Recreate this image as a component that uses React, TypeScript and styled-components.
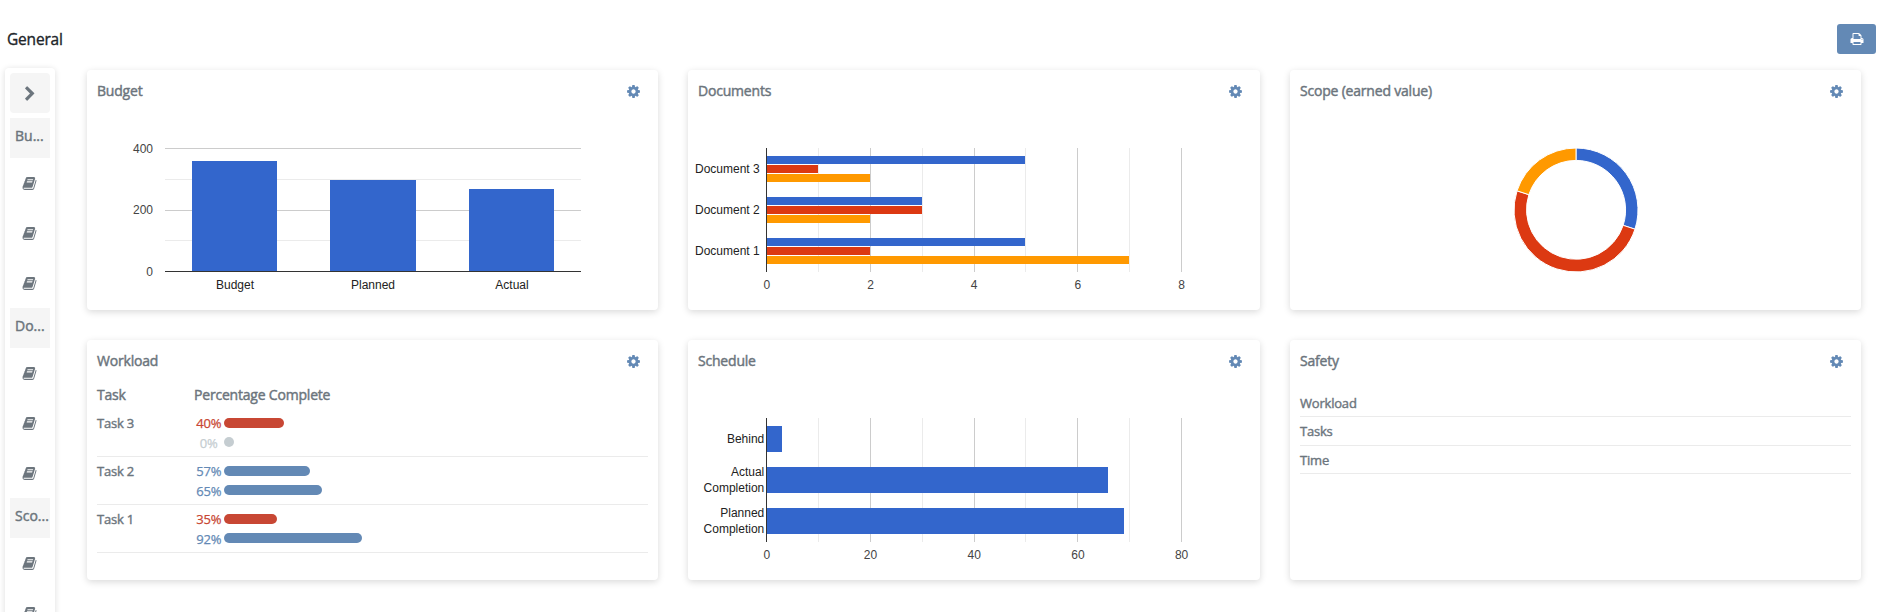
import React from 'react';
import styled, { createGlobalStyle } from 'styled-components';

const GlobalStyle = createGlobalStyle`
  * { box-sizing: border-box; }
  html, body { margin: 0; padding: 0; background: #fff; overflow: hidden; }
  body { font-family: "Open Sans", "Noto Sans", sans-serif; color: #6c757d; }
`;

const BLUE = '#3366cc';
const RED = '#dc3912';
const ORANGE = '#ff9900';

const Page = styled.div`
  height: 612px;
  display: flex;
  flex-direction: column;
  overflow: hidden;
`;

const TopBar = styled.header`
  flex: none;
  height: 68px;
  padding: 10px 14px 0 7px;
  display: flex;
  align-items: center;
  justify-content: space-between;
`;

const PageTitle = styled.h1`
  margin: 0;
  font-size: 15.5px;
  font-weight: 400;
  line-height: 20px;
  letter-spacing: -0.2px;
  color: #212529;
  -webkit-text-stroke: 0.35px currentColor;
`;

const PrintButton = styled.button`
  width: 39px;
  height: 30px;
  padding: 0;
  border: 0;
  border-radius: 3px;
  display: flex;
  align-items: center;
  justify-content: center;
  background: #6389b5;
  color: #fff;
`;

const Body = styled.div`
  flex: 1;
  min-height: 0;
  display: flex;
  align-items: flex-start;
  gap: 32px;
  padding-left: 5px;
`;

const Sidebar = styled.nav`
  flex: none;
  width: 50px;
  padding: 5px;
  border-radius: 4px;
  background: #fff;
  box-shadow: 0 1px 6px rgba(0, 0, 0, 0.14);
`;

const Toggle = styled.button`
  width: 40px;
  height: 40px;
  margin-bottom: 5px;
  padding: 1px 0 0;
  border: 0;
  border-radius: 4px;
  display: flex;
  align-items: center;
  justify-content: center;
  background: #f5f5f5;
  color: #6c757d;
`;

const GroupName = styled.div`
  height: 40px;
  padding: 0 1px 4px 5px;
  background: #f5f5f5;
  font-size: 14px;
  font-weight: 400;
  line-height: 36px;
  white-space: nowrap;
  -webkit-text-stroke: 0.45px currentColor;
`;

const NavItem = styled.a`
  height: 50px;
  padding-right: 1px;
  display: flex;
  align-items: center;
  justify-content: center;
  color: #6c757d;
`;

const Grid = styled.main`
  display: grid;
  grid-template-columns: 571px 572px 571px;
  grid-auto-rows: 240px;
  gap: 30px;
  padding-top: 2px;
`;

const Card = styled.section`
  border-radius: 4px;
  background: #fff;
  box-shadow: 0 2px 7px rgba(0, 0, 0, 0.15);
`;

const CardHeader = styled.div`
  height: 40px;
  padding: 2px 17px 0 10px;
  display: flex;
  align-items: center;
  justify-content: space-between;
  color: #6389b5;
`;

const CardTitle = styled.h2`
  margin: 0;
  color: #6c757d;
  font-size: 14px;
  font-weight: 400;
  line-height: 20px;
  letter-spacing: -0.2px;
  -webkit-text-stroke: 0.45px currentColor;
`;

const Chart = styled.svg`
  display: block;
  width: 100%;
  height: 200px;
  font-family: "Liberation Sans", Arial, sans-serif;
  font-size: 12px;
`;

const Table = styled.div`
  margin: 0 10px;
  font-size: 13px;
  font-weight: 400;
`;

const TableHead = styled.div`
  display: grid;
  grid-template-columns: 97px 1fr;
  height: 29px;
  padding-top: 5px;
  font-size: 14px;
  line-height: 20px;
  letter-spacing: -0.2px;
  -webkit-text-stroke: 0.45px currentColor;
`;

const TaskRow = styled.div`
  display: grid;
  grid-template-columns: 97px 1fr;
  height: 48px;
  border-bottom: 1px solid #ebebeb;
`;

const TaskName = styled.div`
  padding-top: 5px;
  font-size: 13px;
  line-height: 18px;
  letter-spacing: -0.2px;
  -webkit-text-stroke: 0.4px currentColor;
`;

const Meters = styled.div`
  padding-top: 5px;
`;

const Meter = styled.div<{ $color: string }>`
  display: grid;
  grid-template-columns: 30px 1fr;
  height: 19px;
  color: ${(p) => p.$color};
`;

const Percent = styled.span<{ $low?: boolean }>`
  padding: ${(p) => (p.$low ? '1px' : '0')} 0.5px 0 0;
  text-align: center;
  font-size: 13px;
  line-height: 18px;
  letter-spacing: -0.2px;
  -webkit-text-stroke: 0.25px currentColor;
`;

const MeterBar = styled.span`
  margin-top: 4px;
  height: 10px;
  min-width: 10px;
  border-radius: 5px;
  background: currentColor;
`;

const List = styled.ul`
  list-style: none;
  margin: 0 10px;
  padding: 8.5px 0 0;
`;

const ListRow = styled.li`
  height: 28.5px;
  padding-top: 5px;
  border-bottom: 1px solid #ebebeb;
  font-size: 13px;
  line-height: 18px;
  letter-spacing: -0.2px;
  -webkit-text-stroke: 0.4px currentColor;
`;

const PATHS = {
  cog: 'M1152 896q0-106-75-181t-181-75-181 75-75 181 75 181 181 75 181-75 75-181zm512-109v222q0 12-8 23t-20 13l-185 28q-19 54-39 91 35 50 107 138 10 12 10 25t-9 23q-27 37-99 108t-94 71q-12 0-26-9l-138-108q-44 23-91 38-16 136-29 186-7 28-36 28h-222q-14 0-24.500-8.500t-11.500-21.500l-28-184q-49-16-90-37l-141 107q-10 9-25 9-14 0-25-11-126-114-165-168-7-10-7-23 0-12 8-23 15-21 51-66.500t54-70.500q-27-50-41-99l-183-27q-13-2-21-12.500t-8-23.500v-222q0-12 8-23t19-13l186-28q14-46 39-92-40-57-107-138-10-12-10-24 0-10 9-23 26-36 98.500-107.500t94.500-71.500q13 0 26 10l138 107q44-23 91-38 16-136 29-186 7-28 36-28h222q14 0 24.500 8.500t11.500 21.500l28 184q49 16 90 37l142-107q9-9 24-9 13 0 25 10 129 119 165 170 7 8 7 22 0 12-8 23-15 21-51 66.500t-54 70.500q26 50 41 98l183 28q13 2 21 12.500t8 23.500z',
  book: 'M1703 478q40 57 18 129l-275 906q-19 64-76.500 107.500t-122.500 43.500h-923q-77 0-148.500-53.500t-99.500-131.500q-24-67-2-127 0-4 3-27t4-37q1-8-3-21.500t-3-19.500q2-11 8-21t16.500-23.500 16.500-23.500q23-38 45-91.500t30-91.500q3-10 .5-30t-.5-28q3-11 17-28t17-23q21-36 42-92t25-90q1-9-2.500-32t.5-28q4-13 22-30.500t22-22.500q19-26 42.500-84.500t27.500-96.500q1-8-3-25.500t-2-26.500q2-8 9-18t18-23 17-21q8-12 16.500-30.500t15-35 16-36 19.500-32 26.500-23.500 36-11.500 47.500 5.500l-1 3q38-9 51-9h761q74 0 114 56t18 130l-274 906q-36 119-71.500 153.500t-128.500 34.500h-869q-27 0-38 15-11 16-1 43 24 70 144 70h923q29 0 56-15.500t35-41.500l300-987q7-22 5-57 38 15 59 43zm-1064 2q-4 13 2 22.500t20 9.500h608q13 0 25.500-9.500t16.500-22.500l21-64q4-13-2-22.500t-20-9.500h-608q-13 0-25.500 9.500t-16.500 22.500zm-83 256q-4 13 2 22.500t20 9.500h608q13 0 25.500-9.500t16.500-22.500l21-64q4-13-2-22.500t-20-9.500h-608q-13 0-25.500 9.500t-16.500 22.500z',
  print: 'M448 1536h896v-256h-896v256zm0-640h896v-384h-160q-40 0-68-28t-28-68v-160h-640v640zm1152 64q0-26-19-45t-45-19-45 19-19 45 19 45 45 19 45-19 19-45zm128 0v416q0 13-9.500 22.500t-22.500 9.500h-224v160q0 40-28 68t-68 28h-960q-40 0-68-28t-28-68v-160h-224q-13 0-22.500-9.500t-9.500-22.500v-416q0-79 56.500-135.500t135.500-56.500h64v-544q0-40 28-68t68-28h672q40 0 88 20t76 48l152 152q28 28 48 76t20 88v256h64q79 0 135.500 56.500t56.500 135.500z',
  chevron: 'M1363 877l-742 742q-19 19-45 19t-45-19l-166-166q-19-19-19-45t19-45l531-531-531-531q-19-19-19-45t19-45l166-166q19-19 45-19t45 19l742 742q19 19 19 45t-19 45z',
};

function Icon({ name, size }: { name: keyof typeof PATHS; size: number }) {
  return (
    <svg width={size} height={size} viewBox="0 0 1792 1792" fill="currentColor" aria-hidden>
      <path d={PATHS[name]} />
    </svg>
  );
}

function Widget({ title, children }: { title: string; children: React.ReactNode }) {
  return (
    <Card>
      <CardHeader>
        <CardTitle>{title}</CardTitle>
        <Icon name="cog" size={15} />
      </CardHeader>
      {children}
    </Card>
  );
}

function ColumnChart() {
  const lines = [
    { y: 38, major: true },
    { y: 69, major: false },
    { y: 100, major: true },
    { y: 130, major: false },
  ];
  const columns = [
    { x: 105, y: 51, label: 'Budget' },
    { x: 243, y: 70, label: 'Planned' },
    { x: 382, y: 79, label: 'Actual' },
  ];
  return (
    <Chart viewBox="0 0 571 200">
      <g shapeRendering="crispEdges">
        {lines.map((l) => (
          <rect key={l.y} x={78} y={l.y} width={416} height={1} fill={l.major ? '#ccc' : '#ebebeb'} />
        ))}
        {columns.map((c) => (
          <rect key={c.x} x={c.x} y={c.y} width={c.x === 243 ? 86 : 85} height={161 - c.y} fill={BLUE} />
        ))}
        <rect x={78} y={161} width={416} height={1} fill="#333" />
      </g>
      <g fill="#444" textAnchor="end">
        <text x={66} y={43}>400</text>
        <text x={66} y={104}>200</text>
        <text x={66} y={166}>0</text>
      </g>
      <g fill="#222" textAnchor="middle">
        {columns.map((c) => (
          <text key={c.label} x={c.x + 43} y={179}>{c.label}</text>
        ))}
      </g>
    </Chart>
  );
}

type BarGroup = { label: string[]; values: number[] };

function BarChart({ groups, unit, labelEnd }: { groups: BarGroup[]; unit: number; labelEnd: number }) {
  const left = 78;
  const ticks = [52, 104, 156, 208, 259, 311, 363, 415];
  const colors = [BLUE, RED, ORANGE];
  return (
    <Chart viewBox="0 0 572 200">
      <g shapeRendering="crispEdges">
        {ticks.map((t, i) => (
          <rect key={t} x={left + t} y={38} width={1} height={124} fill={i % 2 ? '#ccc' : '#ebebeb'} />
        ))}
        {groups.map((g, gi) =>
          g.values.map((v, vi) => (
            <rect
              key={`${gi}-${vi}`}
              x={left + 1}
              y={46 + gi * 41 + vi * 9}
              width={Math.round((v / unit) * 51.85) - 1}
              height={g.values.length === 1 ? 26 : 8}
              fill={colors[vi]}
            />
          )),
        )}
        <rect x={left} y={38} width={1} height={124} fill="#333" />
      </g>
      <g fill="#222" textAnchor="end">
        {groups.map((g, gi) =>
          g.label.map((line, li) => (
            <text key={`${gi}-${li}`} x={labelEnd} y={63 + gi * 41 + (g.label.length > 1 ? -8 + li * 16 : 0)}>
              {line}
            </text>
          )),
        )}
      </g>
      <g fill="#444" textAnchor="middle">
        {[0, 2, 4, 6, 8].map((n) => (
          <text key={n} x={left + 0.8 + n * 51.85} y={179}>{n * unit}</text>
        ))}
      </g>
    </Chart>
  );
}

function DonutChart() {
  const cx = 286;
  const cy = 100;
  const point = (r: number, f: number) => {
    const a = f * Math.PI * 2;
    return `${(cx + r * Math.sin(a)).toFixed(2)} ${(cy - r * Math.cos(a)).toFixed(2)}`;
  };
  const slices = [
    { from: 0, to: 0.3, color: BLUE },
    { from: 0.3, to: 0.8, color: RED },
    { from: 0.8, to: 1, color: ORANGE },
  ];
  return (
    <Chart viewBox="0 0 571 200">
      {slices.map((s) => (
        <path
          key={s.color}
          d={`M${point(62, s.from)}A62 62 0 0 1 ${point(62, s.to)}L${point(49.6, s.to)}A49.6 49.6 0 0 0 ${point(49.6, s.from)}Z`}
          fill={s.color}
          stroke="#fff"
          strokeWidth={1}
        />
      ))}
    </Chart>
  );
}

const tasks = [
  { name: 'Task 3', meters: [{ value: 40, color: '#c84734' }, { value: 0, color: '#c5cdd1' }] },
  { name: 'Task 2', meters: [{ value: 57, color: '#6389b5' }, { value: 65, color: '#6389b5' }] },
  { name: 'Task 1', meters: [{ value: 35, color: '#c84734' }, { value: 92, color: '#6389b5' }] },
];

export default function App() {
  return (
    <Page>
      <GlobalStyle />
      <TopBar>
        <PageTitle>General</PageTitle>
        <PrintButton aria-label="Print">
          <Icon name="print" size={14} />
        </PrintButton>
      </TopBar>
      <Body>
        <Sidebar>
          <Toggle aria-label="Expand">
            <Icon name="chevron" size={16} />
          </Toggle>
          {['Bu...', 'Do...', 'Sco...'].map((name) => (
            <React.Fragment key={name}>
              <GroupName>{name}</GroupName>
              <NavItem><Icon name="book" size={15} /></NavItem>
              <NavItem><Icon name="book" size={15} /></NavItem>
              <NavItem><Icon name="book" size={15} /></NavItem>
            </React.Fragment>
          ))}
        </Sidebar>
        <Grid>
          <Widget title="Budget">
            <ColumnChart />
          </Widget>
          <Widget title="Documents">
            <BarChart
              unit={1}
              labelEnd={71.7}
              groups={[
                { label: ['Document 3'], values: [5, 1, 2] },
                { label: ['Document 2'], values: [3, 3, 2] },
                { label: ['Document 1'], values: [5, 2, 7] },
              ]}
            />
          </Widget>
          <Widget title="Scope (earned value)">
            <DonutChart />
          </Widget>
          <Widget title="Workload">
            <Table>
              <TableHead>
                <span>Task</span>
                <span>Percentage Complete</span>
              </TableHead>
              {tasks.map((t) => (
                <TaskRow key={t.name}>
                  <TaskName>{t.name}</TaskName>
                  <Meters>
                    {t.meters.map((m, i) => (
                      <Meter key={i} $color={m.color}>
                        <Percent $low={i === 1}>{m.value}%</Percent>
                        <MeterBar style={{ width: m.value * 1.5 }} />
                      </Meter>
                    ))}
                  </Meters>
                </TaskRow>
              ))}
            </Table>
          </Widget>
          <Widget title="Schedule">
            <BarChart
              unit={10}
              labelEnd={76.3}
              groups={[
                { label: ['Behind'], values: [3] },
                { label: ['Actual', 'Completion'], values: [66] },
                { label: ['Planned', 'Completion'], values: [69] },
              ]}
            />
          </Widget>
          <Widget title="Safety">
            <List>
              <ListRow>Workload</ListRow>
              <ListRow>Tasks</ListRow>
              <ListRow>Time</ListRow>
            </List>
          </Widget>
        </Grid>
      </Body>
    </Page>
  );
}
